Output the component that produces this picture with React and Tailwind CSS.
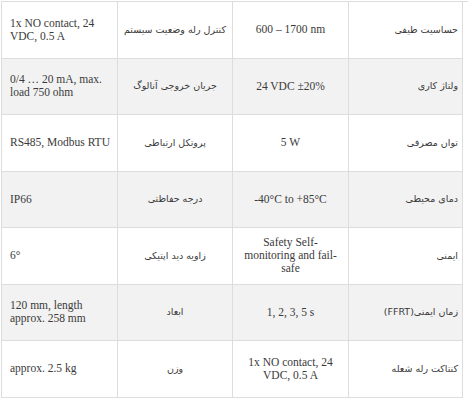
const rows = [
  ['1x NO contact, 24 VDC, 0.5 A', 'کنترل رله وضعیت سیستم', '600 – 1700 nm', 'حساسیت طیفی'],
  ['0/4 … 20 mA, max. load 750 ohm', 'جریان خروجی آنالوگ', '24 VDC ±20%', 'ولتاژ کاری'],
  ['RS485, Modbus RTU', 'پروتکل ارتباطی', '5 W', 'توان مصرفی'],
  ['IP66', 'درجه حفاظتی', '-40°C to +85°C', 'دمای محیطی'],
  ['6°', 'زاویه دید اپتیکی', 'Safety Self-monitoring and fail-safe', 'ایمنی'],
  ['120 mm, length approx. 258 mm', 'ابعاد', '1, 2, 3, 5 s', 'زمان ایمنی(FFRT)'],
  ['approx. 2.5 kg', 'وزن', '1x NO contact, 24 VDC, 0.5 A', 'کنتاکت رله شعله'],
];

const en = "font-['Liberation_Serif',serif] text-[11.5px] leading-[13px]";
const fa = "font-['DejaVu_Sans',sans-serif] text-[9.5px] leading-[14px]";

export default function App() {
  return (
    <div className="w-[469px] h-[400px] bg-white pt-px pl-px text-[#3a3a3a]">
      <div className="grid grid-cols-[116px_115px_116px_114px] w-[467px] border-t border-l border-[#dddddd]">
        {rows.map((r, i) => {
          const bg = i % 2 === 1 ? 'bg-[#f2f2f2]' : 'bg-white';
          return [
            <div key={i + 'a'} className={`${bg} ${en} h-[55.5px] box-content border-r border-b border-[#dddddd] flex items-center pl-2 pr-0.5`}>
              {r[0]}
            </div>,
            <div key={i + 'b'} dir="rtl" className={`${bg} ${fa} h-[55.5px] box-content border-r border-b border-[#dddddd] flex items-center justify-center text-center px-1`}>
              {r[1]}
            </div>,
            <div key={i + 'c'} className={`${bg} ${en} h-[55.5px] box-content border-r border-b border-[#dddddd] flex items-center justify-center text-center px-2`}>
              {r[2]}
            </div>,
            <div key={i + 'd'} dir="rtl" className={`${bg} ${fa} h-[55.5px] box-content border-r border-b border-[#dddddd] flex items-center px-1`}>
              {r[3]}
            </div>,
          ];
        })}
      </div>
    </div>
  );
}
